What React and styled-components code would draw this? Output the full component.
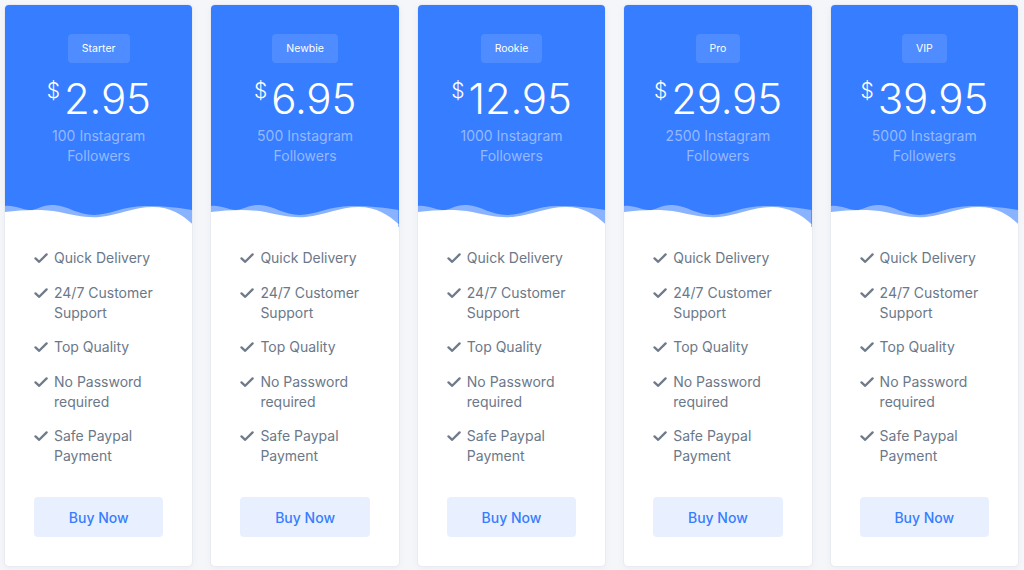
import React from "react";
import styled, { createGlobalStyle } from "styled-components";

const GlobalStyle = createGlobalStyle`
  html, body {
    margin: 0;
    padding: 0;
    background: #f5f6f9;
    font-family: Inter, "Open Sans", "Liberation Sans", sans-serif;
  }
`;

const plans = [
  { name: "Starter", price: "2.95", followers: "100" },
  { name: "Newbie", price: "6.95", followers: "500" },
  { name: "Rookie", price: "12.95", followers: "1000" },
  { name: "Pro", price: "29.95", followers: "2500" },
  { name: "VIP", price: "39.95", followers: "5000" },
];

const features = [
  "Quick Delivery",
  "24/7 Customer Support",
  "Top Quality",
  "No Password required",
  "Safe Paypal Payment",
];

const Page = styled.div`
  display: grid;
  grid-template-columns: repeat(5, 1fr);
  gap: 17px;
  padding: 4px 5px 3px 4px;
  width: 1024px;
  box-sizing: border-box;
`;

const Card = styled.div`
  background: #fff;
  border: 1px solid #e8ebf2;
  border-radius: 5px;
  overflow: hidden;
  display: flex;
  flex-direction: column;
  box-shadow: 0 2px 6px rgba(140, 152, 164, 0.08);
`;

const Header = styled.div`
  background: #377dff;
  display: flex;
  flex-direction: column;
  align-items: center;
  padding-top: 29px;
  height: 191px;
  box-sizing: border-box;
`;

const Badge = styled.span`
  display: inline-block;
  background: rgba(255, 255, 255, 0.12);
  color: #fff;
  font-size: 10.5px;
  line-height: 29px;
  padding: 0 14px;
  border-radius: 4px;
`;

const Price = styled.div`
  display: flex;
  align-items: flex-start;
  color: #fff;
  margin-top: 16px;
  font-weight: 300;
`;

const Currency = styled.span`
  font-size: 21px;
  line-height: 1;
  margin-right: 4px;
  margin-top: 1px;
`;

const Amount = styled.span`
  display: block;
  font-size: 42px;
  line-height: 40px;
  letter-spacing: -0.2px;
`;

const Followers = styled.div`
  color: rgba(255, 255, 255, 0.47);
  font-size: 14px;
  line-height: 20px;
  text-align: center;
  max-width: 108px;
  margin-top: 7px;
`;

const Wave = styled.svg`
  display: block;
  width: 100%;
  height: 31px;
  background: #377dff;
`;

const Body = styled.div`
  padding: 21px 29px 29px;
  display: flex;
  flex-direction: column;
`;

const List = styled.ul`
  list-style: none;
  margin: 0;
  padding: 0;
  display: flex;
  flex-direction: column;
  gap: 14.5px;
`;

const Item = styled.li`
  display: flex;
  align-items: flex-start;
  gap: 6px;
  color: #6b7889;
  font-size: 14px;
  line-height: 20px;
`;

const Check = styled.svg`
  flex: none;
  width: 14px;
  height: 14px;
  margin-top: 3px;
`;

const BuyButton = styled.button`
  margin-top: 31px;
  height: 40px;
  width: 100%;
  border: none;
  border-radius: 4px;
  background: #e8f0ff;
  color: #377dff;
  font-family: inherit;
  font-size: 14px;
  font-weight: 500;
  cursor: pointer;
`;

const CheckIcon = () => (
  <Check viewBox="0 0 14 14">
    <path
      d="M1.5 7.4 L5.2 10.8 L12.6 3.4"
      fill="none"
      stroke="#6f7b8a"
      strokeWidth="2.3"
      strokeLinecap="round"
      strokeLinejoin="round"
    />
  </Check>
);

const WaveShape = () => (
  <Wave viewBox="0 0 190 31" preserveAspectRatio="none">
    <path
      d="M0,10 C10,9 17,14 25,14 C33,14 39,8 50,9 C64,10 74,19 90,19 C106,19 120,10 142,10 C162,10 178,12 190,14 L190,31 L0,31 Z"
      fill="#8ab3ff"
    />
    <path
      d="M0,16 C18,14 38,13 55,16 C70,19 80,22 96,21 C116,19 130,11 150,11 C168,11 180,19 190,28 L190,31 L0,31 Z"
      fill="#ffffff"
    />
  </Wave>
);

const PlanCard = ({ plan }) => (
  <Card>
    <Header>
      <Badge>{plan.name}</Badge>
      <Price>
        <Currency>$</Currency>
        <Amount>{plan.price}</Amount>
      </Price>
      <Followers>{plan.followers} Instagram Followers</Followers>
    </Header>
    <WaveShape />
    <Body>
      <List>
        {features.map((f) => (
          <Item key={f}>
            <CheckIcon />
            <span>{f}</span>
          </Item>
        ))}
      </List>
      <BuyButton>Buy Now</BuyButton>
    </Body>
  </Card>
);

export default function App() {
  return (
    <>
      <GlobalStyle />
      <Page>
        {plans.map((p) => (
          <PlanCard key={p.name} plan={p} />
        ))}
      </Page>
    </>
  );
}
